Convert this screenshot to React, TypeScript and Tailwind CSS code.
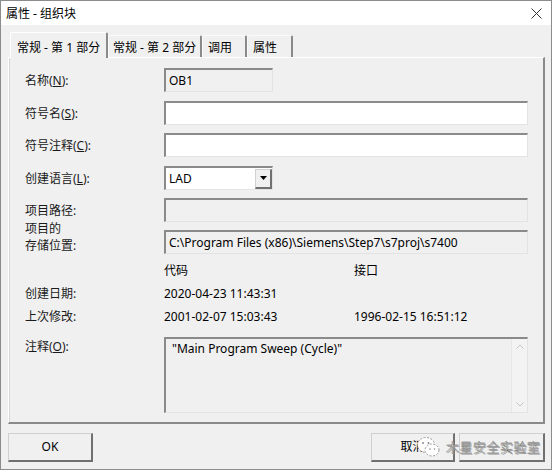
import React from 'react';

const FONT = { fontFamily: '"Noto Sans", "Noto Sans CJK SC", sans-serif' };

const sunken =
  'border-t-2 border-l-2 border-b border-r border-t-[#8a8a8a] border-l-[#8a8a8a] border-b-[#e3e3e3] border-r-[#e3e3e3]';

const raised =
  'border-t border-l border-b-2 border-r-2 border-t-[#d0d0d0] border-l-[#d0d0d0] border-b-[#707070] border-r-[#707070] bg-[#f0f0f0]';

function Field({ value, disabled, width = 'w-[364px]' }: { value?: string; disabled?: boolean; width?: string }) {
  return (
    <div
      className={`${width} h-[24px] ${sunken} ${disabled ? 'bg-[#f0f0f0]' : 'bg-white'} flex items-center pl-[3px] text-[12px] text-black whitespace-nowrap overflow-hidden`}
    >
      {value}
    </div>
  );
}

function Label({ children }: { children: React.ReactNode }) {
  return <div className="w-[139px] shrink-0 text-[12px] leading-[17px] text-[#1a1a1a]">{children}</div>;
}

function Row({ label, children, className = '' }: { label: React.ReactNode; children: React.ReactNode; className?: string }) {
  return (
    <div className={`flex items-center h-[24px] ${className}`}>
      <Label>{label}</Label>
      {children}
    </div>
  );
}

function Tab({ label, width, active, pl }: { label: string; width: string; active?: boolean; pl: string }) {
  if (active) {
    return (
      <div
        className={`${width} ${pl} relative z-10 -mb-px h-[26px] pt-[6px] bg-[#f0f0f0] border-t border-l border-white border-r-2 border-r-[#8a8a8a] rounded-t-[2px] text-[12px] leading-[17px] whitespace-nowrap`}
      >
        {label}
      </div>
    );
  }
  return (
    <div
      className={`${width} ${pl} h-[22px] pt-[3px] border-t border-l border-[#fafafa] border-r-2 border-r-[#8a8a8a] rounded-t-[2px] text-[12px] leading-[17px] whitespace-nowrap`}
    >
      {label}
    </div>
  );
}

function WeChatIcon() {
  return (
    <svg width="26" height="24" viewBox="0 0 26 24">
      <ellipse cx="10" cy="10" rx="8.5" ry="7.5" fill="white" stroke="#9a9a9a" strokeWidth="1" strokeDasharray="2 1.5" />
      <ellipse cx="16" cy="15" rx="7" ry="6" fill="white" stroke="#9a9a9a" strokeWidth="1" strokeDasharray="2 1.5" />
      <circle cx="7" cy="8" r="1" fill="#8a8a8a" />
      <circle cx="12.5" cy="8" r="1" fill="#8a8a8a" />
      <circle cx="14" cy="14" r="0.8" fill="#8a8a8a" />
      <circle cx="18.5" cy="14" r="0.8" fill="#8a8a8a" />
    </svg>
  );
}

export default function App() {
  return (
    <div className="w-[554px] h-[473px] bg-white text-black" style={FONT}>
      <div className="w-[552px] h-[470px] border border-[#8c8c8c] bg-[#f0f0f0] flex flex-col">
        {/* title bar */}
        <div className="h-[24px] bg-white flex items-center justify-between pl-[5px] pr-[9px]">
          <span className="text-[12px] leading-[17px] pt-[1px]">属性 - 组织块</span>
          <svg width="11" height="11" viewBox="0 0 11 11" className="mt-[1px]">
            <path d="M0.5 0.5L10.5 10.5M10.5 0.5L0.5 10.5" stroke="#333" strokeWidth="1" />
          </svg>
        </div>

        <div className="flex-1 pl-[7px] pr-[6px] pt-[7px] relative">
          {/* tabs */}
          <div className="flex items-end h-[25px] pl-[2px]">
            <Tab label="常规 - 第 1 部分" width="w-[98px]" pl="pl-[6px]" active />
            <Tab label="常规 - 第 2 部分" width="w-[94px]" pl="pl-[4px]" />
            <Tab label="调用" width="w-[45px]" pl="pl-[5px]" />
            <Tab label="属性" width="w-[46px]" pl="pl-[5px]" />
          </div>

          {/* tab panel */}
          <div className="h-[367px] border-t border-l border-white border-r-2 border-b-2 border-r-[#8a8a8a] border-b-[#8a8a8a] shadow-[inset_1px_0_0_#d6d6d6] pl-[16px] pt-[10px]">
            <Row label={<span>名称(<u>N</u>):</span>}>
              <Field value="OB1" disabled width="w-[109px]" />
            </Row>
            <Row label={<span>符号名(<u>S</u>):</span>} className="mt-[9px]">
              <Field />
            </Row>
            <Row label={<span>符号注释(<u>C</u>):</span>} className="mt-[8px]">
              <Field />
            </Row>
            <Row label={<span>创建语言(<u>L</u>):</span>} className="mt-[9px]">
              <div className={`w-[109px] h-[24px] ${sunken} bg-white flex items-center`}>
                <span className="flex-1 pl-[3px] text-[12px]">LAD</span>
                <div className={`w-[17px] h-[20px] ${raised} flex items-center justify-center`}>
                  <svg width="7" height="4" viewBox="0 0 7 4">
                    <path d="M0 0H7L3.5 4Z" fill="#000" />
                  </svg>
                </div>
              </div>
            </Row>
            <Row label="项目路径:" className="mt-[8px]">
              <Field disabled />
            </Row>
            <div className="flex items-end h-[24px] mt-[8px]">
              <Label>
                <div>项目的</div>
                <div>存储位置:</div>
              </Label>
              <Field value="C:\Program Files (x86)\Siemens\Step7\s7proj\s7400" disabled />
            </div>

            <div className="flex h-[17px] mt-[8px] text-[12px] leading-[17px]">
              <div className="w-[139px]" />
              <div className="w-[190px]">代码</div>
              <div>接口</div>
            </div>
            <div className="flex h-[17px] mt-[6px] text-[12px] leading-[17px]">
              <Label>创建日期:</Label>
              <div className="w-[190px]">2020-04-23 11:43:31</div>
              <div />
            </div>
            <div className="flex h-[17px] mt-[6px] text-[12px] leading-[17px]">
              <Label>上次修改:</Label>
              <div className="w-[190px]">2001-02-07 15:03:43</div>
              <div>1996-02-15 16:51:12</div>
            </div>

            <div className="flex mt-[12px]">
              <div className="pt-[1px]">
                <Label>
                  注释(<u>O</u>):
                </Label>
              </div>
              <div className={`w-[364px] h-[76px] ${sunken} bg-[#f0f0f0] flex`}>
                <div className="flex-1 pl-[6px] pt-[1px] text-[12px] leading-[17px]">"Main Program Sweep (Cycle)"</div>
                <div className="w-[16px] bg-[#f3f3f3] border-l border-[#e6e6e6] flex flex-col items-center justify-between py-[5px]">
                  <svg width="8" height="5" viewBox="0 0 8 5">
                    <path d="M0.5 4.5L4 1L7.5 4.5" fill="none" stroke="#c4c4c4" strokeWidth="1" />
                  </svg>
                  <svg width="8" height="5" viewBox="0 0 8 5">
                    <path d="M0.5 0.5L4 4L7.5 0.5" fill="none" stroke="#c4c4c4" strokeWidth="1" />
                  </svg>
                </div>
              </div>
            </div>
          </div>

          {/* buttons */}
          <div className="flex mt-[9px]">
            <div className={`w-[85px] h-[29px] ${raised} flex items-center justify-center text-[12px]`}>OK</div>
            <div className="ml-auto flex gap-[4px]">
              <div className={`w-[84px] h-[29px] ${raised} flex items-center justify-center text-[12px]`}>取消</div>
              <div className={`w-[86px] h-[29px] ${raised}`} />
            </div>
          </div>

          {/* watermark overlay */}
          <div className="absolute left-[415px] top-[410px] flex items-center gap-[4px] pointer-events-none">
            <WeChatIcon />
            <span
              className="text-[13px] leading-[17px] text-white tracking-[0.5px] font-light"
              style={{ WebkitTextStroke: '0.3px #666', textShadow: '0 0 1px #888, 1px 1px 0 #999' }}
            >
              木星安全实验室
            </span>
          </div>
        </div>
      </div>
    </div>
  );
}
